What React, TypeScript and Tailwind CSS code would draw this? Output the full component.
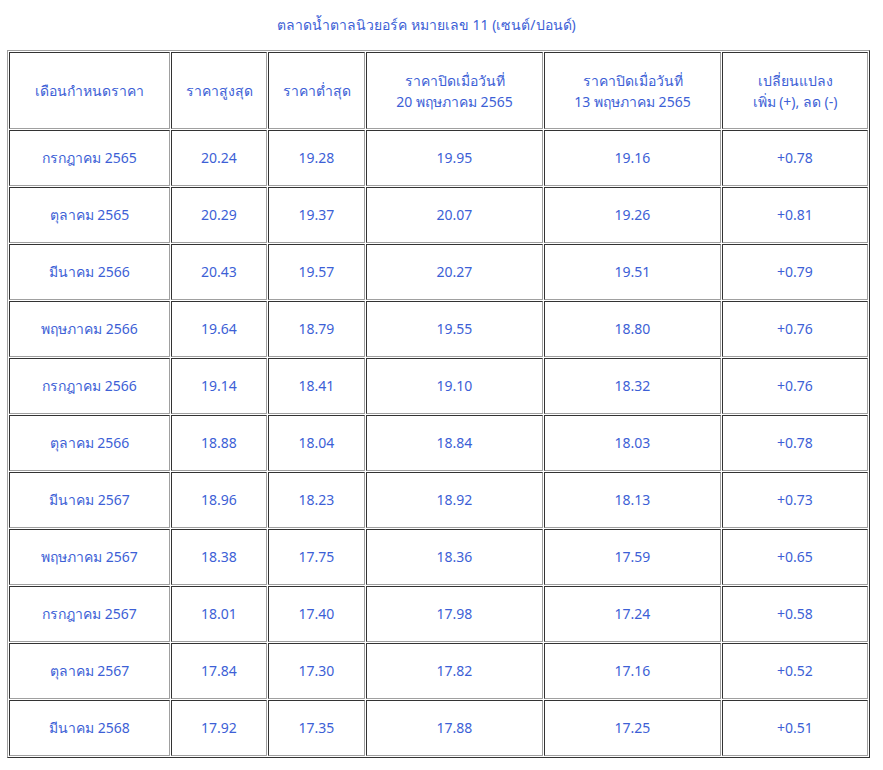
const rows: string[][] = [
  ["กรกฎาคม 2565", "20.24", "19.28", "19.95", "19.16", "+0.78"],
  ["ตุลาคม 2565", "20.29", "19.37", "20.07", "19.26", "+0.81"],
  ["มีนาคม 2566", "20.43", "19.57", "20.27", "19.51", "+0.79"],
  ["พฤษภาคม 2566", "19.64", "18.79", "19.55", "18.80", "+0.76"],
  ["กรกฎาคม 2566", "19.14", "18.41", "19.10", "18.32", "+0.76"],
  ["ตุลาคม 2566", "18.88", "18.04", "18.84", "18.03", "+0.78"],
  ["มีนาคม 2567", "18.96", "18.23", "18.92", "18.13", "+0.73"],
  ["พฤษภาคม 2567", "18.38", "17.75", "18.36", "17.59", "+0.65"],
  ["กรกฎาคม 2567", "18.01", "17.40", "17.98", "17.24", "+0.58"],
  ["ตุลาคม 2567", "17.84", "17.30", "17.82", "17.16", "+0.52"],
  ["มีนาคม 2568", "17.92", "17.35", "17.88", "17.25", "+0.51"],
];

const cell =
  "border border-t-[#333] border-l-[#333] border-r-[#a0a0a0] border-b-[#a0a0a0] text-center align-middle font-normal p-0";

export default function App() {
  return (
    <div className="bg-white min-h-[770px] text-[14px] text-[#3d5fd6] font-['Tahoma','Noto_Sans','DejaVu_Sans',sans-serif]">
      <div className="pt-[14px] pr-[30px] h-[50px] text-center leading-[22px]">
        ตลาดน้ำตาลนิวยอร์ค หมายเลข 11 (เซนต์/ปอนด์)
      </div>
      <table className="ml-[7px] w-[863px] table-fixed border-separate border-spacing-[1px] border border-t-[#a0a0a0] border-l-[#a0a0a0] border-r-[#333] border-b-[#333]">
        <thead>
          <tr className="h-[77px]">
            <th className={`${cell} w-[161px]`}>เดือนกำหนดราคา</th>
            <th className={`${cell} w-[96px]`}>ราคาสูงสุด</th>
            <th className={`${cell} w-[97px]`}>ราคาต่ำสุด</th>
            <th className={`${cell} w-[177px] leading-[21px]`}>
              ราคาปิดเมื่อวันที่
              <br />
              20 พฤษภาคม 2565
            </th>
            <th className={`${cell} w-[177px] leading-[21px]`}>
              ราคาปิดเมื่อวันที่
              <br />
              13 พฤษภาคม 2565
            </th>
            <th className={`${cell} w-[146px] leading-[21px]`}>
              เปลี่ยนแปลง
              <br />
              เพิ่ม (+), ลด (-)
            </th>
          </tr>
        </thead>
        <tbody>
          {rows.map((r) => (
            <tr key={r[0]} className="h-[56px]">
              {r.map((v, i) => (
                <td key={i} className={`${cell} pb-[2px]`}>
                  {v}
                </td>
              ))}
            </tr>
          ))}
        </tbody>
      </table>
    </div>
  );
}
